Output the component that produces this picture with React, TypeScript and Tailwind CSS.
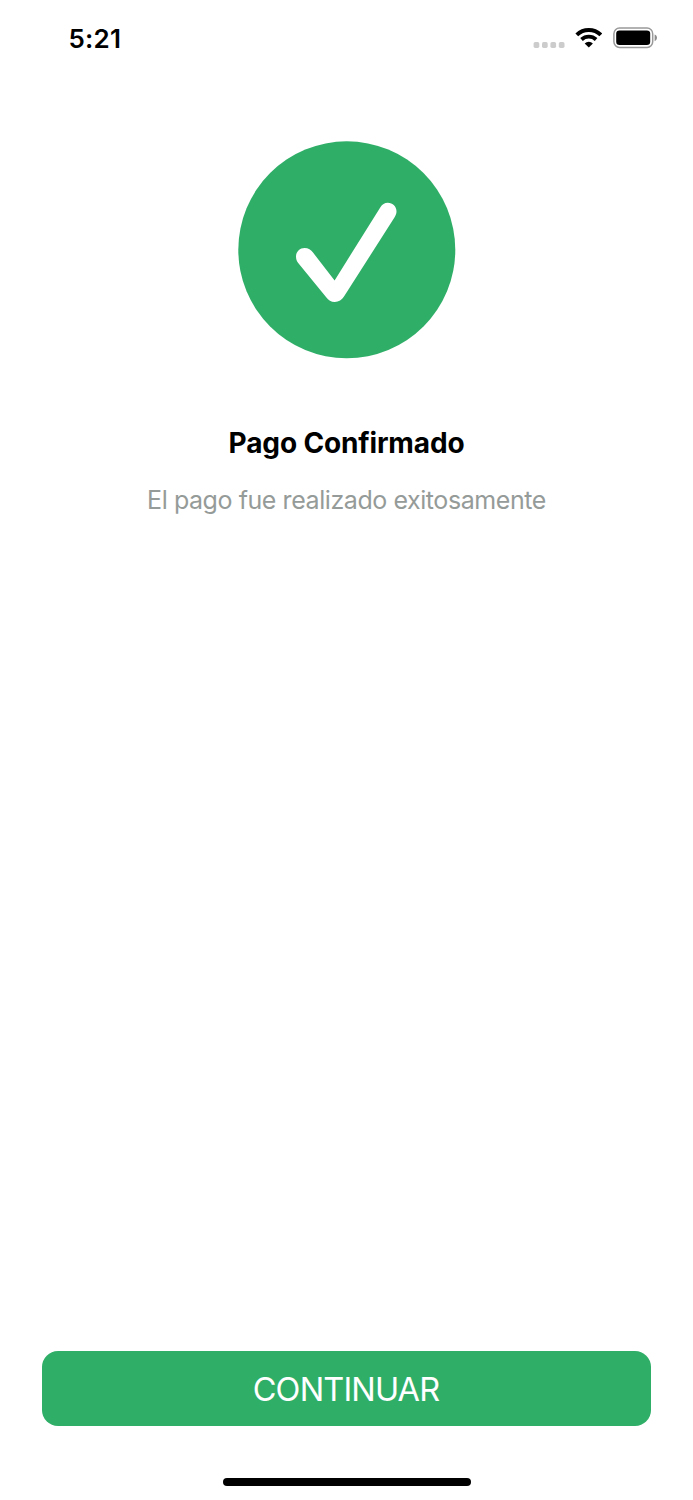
import React from "react";

function SignalIcon() {
  return (
    <svg width="32" height="6" viewBox="0 0 32 6" fill="#cccccc">
      <rect x="0.6" y="0.1" width="5.7" height="5.8" rx="1.6" />
      <rect x="9" y="0.1" width="5.7" height="5.8" rx="1.6" />
      <rect x="17.4" y="0.1" width="5.7" height="5.8" rx="1.6" />
      <rect x="25.8" y="0.1" width="5.7" height="5.8" rx="1.6" />
    </svg>
  );
}

function WifiIcon() {
  return (
    <svg width="27" height="20" viewBox="0 0 27 20" fill="none" stroke="#000000">
      <path d="M1.8 6.9a17.2 17.2 0 0 1 24 0" strokeWidth="4" />
      <path d="M6.5 11.5a10.6 10.6 0 0 1 14.6 0" strokeWidth="3.8" />
      <path
        d="M13.8 19.6l-4.1-4.1a5.9 5.9 0 0 1 8.2 0z"
        fill="#000000"
        stroke="none"
      />
    </svg>
  );
}

function BatteryIcon() {
  return (
    <svg width="45" height="22" viewBox="0 0 45 22">
      <rect
        x="0.9"
        y="1.1"
        width="38.8"
        height="19.3"
        rx="5.6"
        fill="none"
        stroke="#999999"
        strokeWidth="1.5"
      />
      <rect x="3.2" y="3.5" width="34" height="14.6" rx="3.3" fill="#000000" />
      <path d="M41.6 7.4c1.5.6 2.4 1.9 2.4 3.4s-.9 2.8-2.4 3.4z" fill="#8c8c8c" />
    </svg>
  );
}

function StatusBar() {
  return (
    <header className="flex h-[76px] items-center justify-between pl-[68.5px] pr-[35px]">
      <span className="pt-px text-[26px] leading-8 font-semibold tracking-[0.2px] text-black">
        5:21
      </span>
      <div className="flex items-center">
        <div className="mt-[13px] mr-[10px]">
          <SignalIcon />
        </div>
        <div className="mr-[11px]">
          <WifiIcon />
        </div>
        <BatteryIcon />
      </div>
    </header>
  );
}

function SuccessIcon() {
  return (
    <svg width="218" height="218" viewBox="0 0 218 218">
      <circle cx="108.8" cy="108.8" r="108.5" fill="#2fae68" />
      <path
        d="M66.6 107C70.3 107 73 109 75.2 111.8L96.6 139.4L142.4 66.2C144.2 63.4 146.5 61.8 149.8 61.8C154.8 61.8 158.5 65.6 158.5 70.3C158.5 72.6 157.8 74.3 156.6 76.2L106 155.6C103.8 159.1 100.8 161 96.8 161C93 161 90.5 159.2 88.2 156.3L60.2 122C58.7 120 58 118.3 58 115.6C58 110.8 61.8 107 66.6 107z"
        fill="#ffffff"
      />
    </svg>
  );
}

export default function App() {
  return (
    <div className="flex h-[1500px] w-[693px] flex-col bg-white font-['Inter',sans-serif]">
      <StatusBar />
      <main className="flex flex-1 flex-col items-center pt-[65px]">
        <SuccessIcon />
        <h1 className="mt-[64px] text-[28px] leading-10 font-bold tracking-[-0.15px] text-black">
          Pago Confirmado
        </h1>
        <p className="mt-[17px] text-[25px] leading-10 tracking-[-0.43px] text-[#959b98]">
          El pago fue realizado exitosamente
        </p>
      </main>
      <footer className="flex flex-col items-center px-[42px] pb-[14px]">
        <button
          type="button"
          className="h-[75px] w-full rounded-[16px] bg-[#2fae68] pt-[3px] pr-[1px] text-[32.5px] font-normal tracking-[-0.85px] text-white"
        >
          CONTINUAR
        </button>
        <div className="mt-[52px] h-[8px] w-[248px] rounded-full bg-black" />
      </footer>
    </div>
  );
}
